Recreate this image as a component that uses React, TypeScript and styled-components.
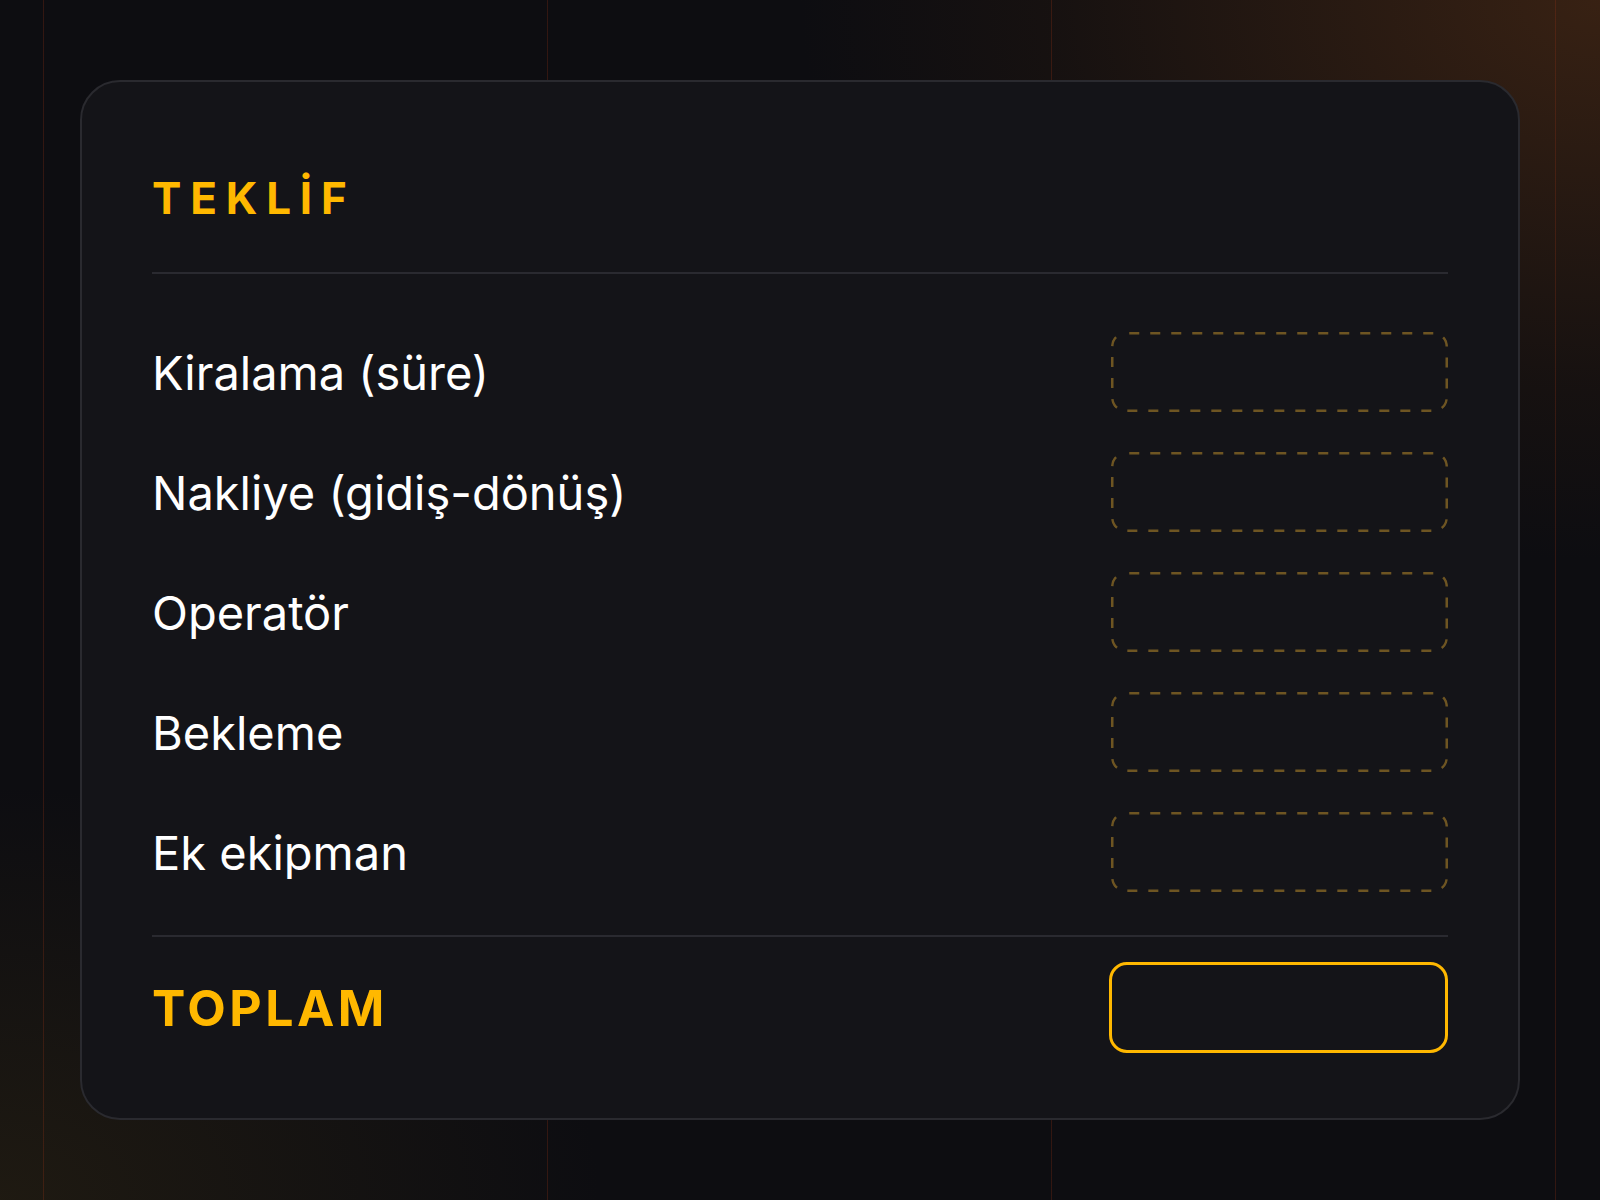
import React from "react";
import styled, { createGlobalStyle } from "styled-components";

const GlobalStyle = createGlobalStyle`
  * { box-sizing: border-box; }
  html, body { margin: 0; padding: 0; }
  body {
    background-color: #0d0d11;
    font-family: "Inter", "Noto Sans", sans-serif;
    -webkit-font-smoothing: antialiased;
  }
`;

const dashedFrame = encodeURIComponent(
  "<svg xmlns='http://www.w3.org/2000/svg' width='337' height='80' viewBox='0 0 337 80'>" +
    "<rect x='1.25' y='1.25' width='334.5' height='77.5' rx='13' ry='13' fill='none' stroke='#6e5522' stroke-width='2.5' stroke-dasharray='10 11' stroke-dashoffset='-4'/>" +
    "</svg>"
);

const Page = styled.div`
  position: relative;
  min-height: 1200px;
  padding: 80px;
  background:
    linear-gradient(90deg, rgba(150, 50, 20, 0.28) 0 1px, transparent 1px 504px) 43px 0 / 504px 100% repeat-x,
    radial-gradient(ellipse 1000px 700px at 100% 0%, rgba(70, 40, 20, 0.75), rgba(40, 25, 15, 0.35) 55%, transparent 80%),
    radial-gradient(ellipse 800px 550px at 0% 100%, rgba(45, 36, 18, 0.55), transparent 75%),
    #0d0d11;
`;

const Card = styled.section`
  border: 2px solid #2a2a2f;
  border-radius: 40px;
  background: #141418;
  padding: 72px 70px 65px;
`;

const Header = styled.header`
  padding: 16px 0 45px;
  border-bottom: 2px solid #2a2a30;
`;

const Title = styled.h2`
  margin: 0;
  font-size: 44px;
  line-height: 57px;
  font-weight: 700;
  letter-spacing: 0.2em;
  color: #ffb800;
`;

const List = styled.div`
  display: flex;
  flex-direction: column;
  gap: 40px;
  padding: 58px 0 43px;
`;

const Row = styled.div`
  display: flex;
  align-items: center;
  justify-content: space-between;
  height: 80px;
`;

const Label = styled.span`
  font-size: 47px;
  font-weight: 400;
  letter-spacing: 0;
  color: #ffffff;
`;

const Slot = styled.div`
  width: 337px;
  height: 80px;
  border-radius: 14px;
  background: url("data:image/svg+xml,${dashedFrame}") no-repeat center / 100% 100%;
`;

const Footer = styled.footer`
  display: flex;
  align-items: center;
  justify-content: space-between;
  border-top: 2px solid #2a2a30;
  padding-top: 25px;
`;

const TotalLabel = styled.span`
  font-size: 50px;
  font-weight: 700;
  letter-spacing: 0.07em;
  color: #ffb800;
`;

const TotalBox = styled.div`
  width: 339px;
  height: 91px;
  border: 3px solid #ffb800;
  border-radius: 18px;
`;

const items = [
  "Kiralama (süre)",
  "Nakliye (gidiş-dönüş)",
  "Operatör",
  "Bekleme",
  "Ek ekipman",
];

export default function App() {
  return (
    <>
      <GlobalStyle />
      <Page>
        <Card>
          <Header>
            <Title>TEKLİF</Title>
          </Header>
          <List>
            {items.map((label) => (
              <Row key={label}>
                <Label>{label}</Label>
                <Slot />
              </Row>
            ))}
          </List>
          <Footer>
            <TotalLabel>TOPLAM</TotalLabel>
            <TotalBox />
          </Footer>
        </Card>
      </Page>
    </>
  );
}
